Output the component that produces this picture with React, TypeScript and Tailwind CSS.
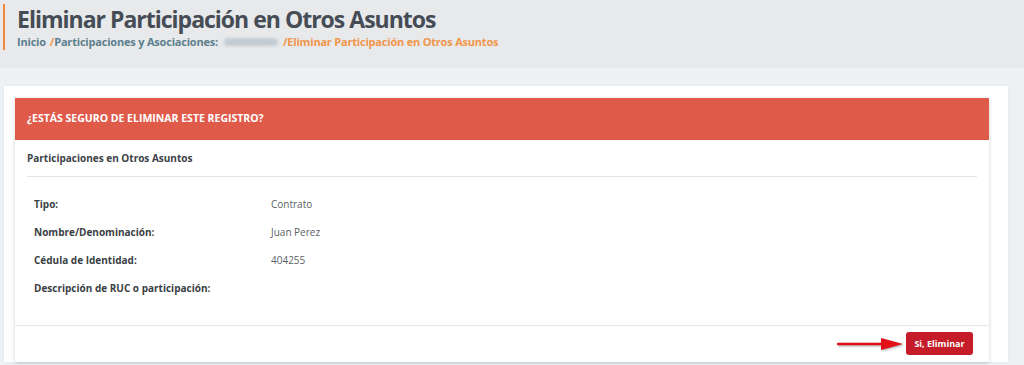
const rows = [
  { label: 'Tipo:', value: 'Contrato' },
  { label: 'Nombre/Denominación:', value: 'Juan Perez' },
  { label: 'Cédula de Identidad:', value: '404255' },
  { label: 'Descripción de RUC o participación:', value: '' },
]

function Arrow() {
  return (
    <svg width="68" height="14" viewBox="0 0 68 14" className="drop-shadow-[1px_1px_1px_rgba(0,0,0,0.35)]">
      <line x1="1" y1="7" x2="48" y2="7" stroke="#e3101a" strokeWidth="2.5" strokeLinecap="round" />
      <path d="M44 1 L66 7 L44 13 Z" fill="#e3101a" />
    </svg>
  )
}

export default function App() {
  return (
    <div className="min-h-[365px] w-full bg-[#eef1f4] font-['Open_Sans',sans-serif]">
      <div className="h-[68px] bg-[#e8e9eb] pt-[4px] pl-[3px]">
        <div className="border-l-2 border-[#f0883e] pl-[12px]">
          <h1 className="text-[23px] leading-[30px] font-bold tracking-[-1px] text-[#454c55]">
            Eliminar Participación en Otros Asuntos
          </h1>
          <div className="flex items-center text-[11px] leading-[16px] font-bold tracking-[-0.2px] text-[#5b7f8e]">
            <span>Inicio</span>
            <span className="ml-[4px] text-[#f0954a]">/</span>
            <span>Participaciones y Asociaciones:</span>
            <span className="ml-[6px] mr-[5px] h-[8px] w-[54px] rounded-sm bg-[#c3ccd3] blur-[1.5px]" />
            <span className="text-[#f0954a]">/Eliminar Participación en Otros Asuntos</span>
          </div>
        </div>
      </div>
      <div className="px-[4px] pt-[18px] pr-[16px]">
        <div className="bg-white pt-[12px] pl-[11px] pr-[19px] shadow-[0_0_3px_rgba(0,0,0,0.06)]">
          <div className="bg-white shadow-[0_1px_4px_rgba(0,0,0,0.18)]">
            <div className="flex h-[42px] items-center bg-[#e05a4a] px-[12px] text-[10.5px] font-bold text-white">
              ¿ESTÁS SEGURO DE ELIMINAR ESTE REGISTRO?
            </div>
            <div className="px-[12px]">
              <div className="flex h-[37px] items-center border-b border-[#e3e5e8] text-[10px] font-bold text-[#3c4248]">
                Participaciones en Otros Asuntos
              </div>
              <div className="flex flex-col gap-[12px] pt-[19px] pb-[29px] pl-[7px]">
                {rows.map((r) => (
                  <div key={r.label} className="flex h-[16px] items-center text-[10px]">
                    <span className="w-[237px] font-bold text-[#3a3f45]">{r.label}</span>
                    <span className="text-[#5a5f66]">{r.value}</span>
                  </div>
                ))}
              </div>
            </div>
            <div className="flex items-center justify-end gap-[1px] border-t border-[#e6e8eb] pt-[6px] pr-[16px] pb-[7px]">
              <Arrow />
              <button className="h-[23px] w-[67px] rounded-[3px] bg-[#c41c28] text-[9px] font-bold text-white">
                Si, Eliminar
              </button>
            </div>
          </div>
        </div>
      </div>
    </div>
  )
}
